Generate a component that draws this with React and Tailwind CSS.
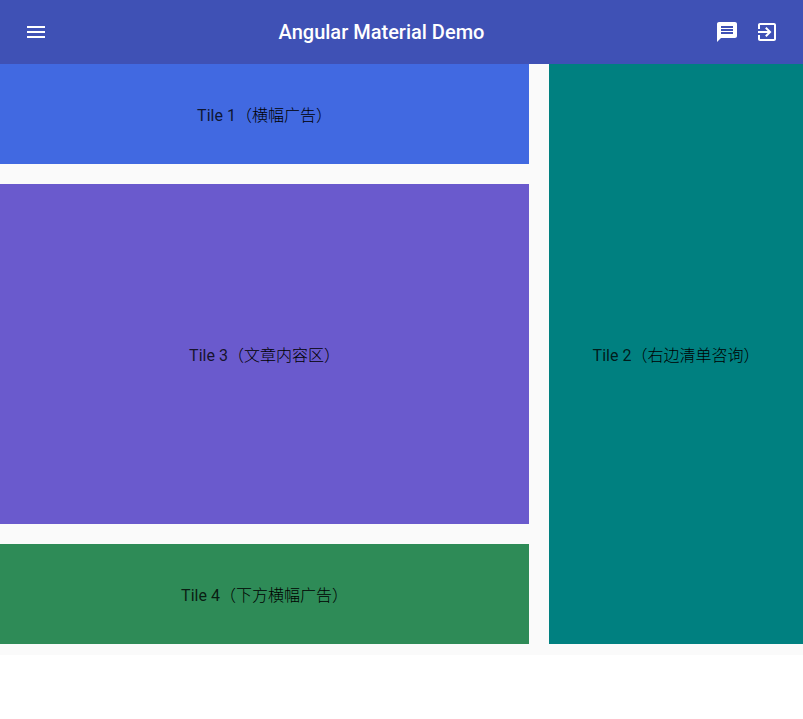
const font = "font-[Roboto,'Noto_Sans_CJK_SC',sans-serif]";

function Icon({ d }) {
  return (
    <svg className="size-6 fill-current" viewBox="0 0 24 24">
      <path d={d} />
    </svg>
  );
}

function Tile({ className, name, label }) {
  return (
    <div className={`flex items-center justify-center pt-1 text-base whitespace-nowrap text-black/80 ${className}`}>
      <span>
        {name}
        <span className="font-light text-black">{label}</span>
      </span>
    </div>
  );
}

export default function App() {
  return (
    <div className={`h-[719px] w-[803px] overflow-hidden bg-white ${font}`}>
      <header className="flex h-16 items-center justify-between bg-[#3f51b5] px-4 text-white">
        <button className="flex size-10 items-center justify-center">
          <Icon d="M3 18h18v-2H3v2zm0-5h18v-2H3v2zm0-7v2h18V6H3z" />
        </button>
        <h1 className="text-xl font-medium">Angular Material Demo</h1>
        <div className="flex">
          <button className="flex size-10 items-center justify-center">
            <Icon d="M20 2H4c-1.1 0-1.99.9-1.99 2L2 22l4-4h14c1.1 0 2-.9 2-2V4c0-1.1-.9-2-2-2zm-2 12H6v-2h12v2zm0-3H6V9h12v2zm0-3H6V6h12v2z" />
          </button>
          <button className="flex size-10 items-center justify-center">
            <Icon d="M10.09 15.59L11.5 17l5-5-5-5-1.41 1.41L12.67 11H3v2h9.67l-2.58 2.59zM19 3H5c-1.11 0-2 .9-2 2v4h2V5h14v14H5v-4H3v4c0 1.1.89 2 2 2h14c1.1 0 2-.9 2-2V5c0-1.1-.9-2-2-2z" />
          </button>
        </div>
      </header>
      <main className="h-[591px] bg-[#fafafa]">
        <div className="grid grid-cols-[529px_254px] grid-rows-[100px_340px_100px] gap-5">
          <Tile className="bg-[#4169e1]" name="Tile 1" label="（横幅广告）" />
          <Tile className="row-span-3 bg-[#008080]" name="Tile 2" label="（右边清单咨询）" />
          <Tile className="bg-[#6a5acd]" name="Tile 3" label="（文章内容区）" />
          <Tile className="bg-[#2e8b57]" name="Tile 4" label="（下方横幅广告）" />
        </div>
      </main>
    </div>
  );
}
